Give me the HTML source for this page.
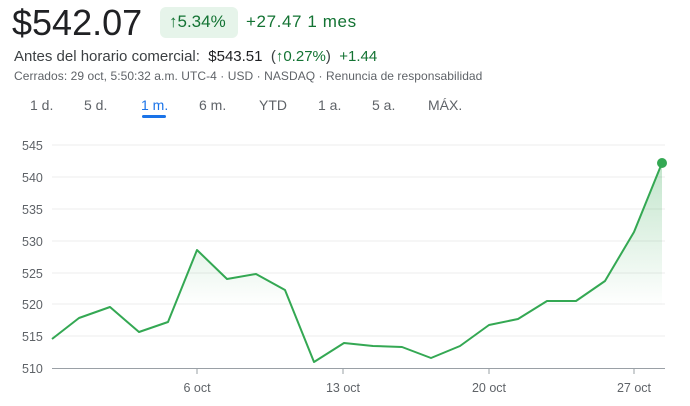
<!DOCTYPE html><html><head><meta charset="utf-8"><style>
body{margin:0;width:690px;height:406px;background:#fff;font-family:"Liberation Sans",Arial,sans-serif;overflow:hidden;position:relative}
.a{position:absolute;white-space:nowrap}
</style></head><body>
<div class="a" style="left:12px;top:2px;font-size:36px;color:#202124">$542.07</div>
<div class="a" style="left:160px;top:7px;width:78px;height:31px;background:#e6f4ea;border-radius:6px"></div>
<div class="a" style="left:169px;top:12px;font-size:17px;color:#137333">↑5.34%</div>
<div class="a" style="left:246px;top:12px;font-size:17px;letter-spacing:0.6px;color:#137333">+27.47 1 mes</div>
<div class="a" style="left:14px;top:48px;font-size:15px;color:#3c4043">Antes del horario comercial:&nbsp; <span style="color:#202124">$543.51</span>&nbsp; <span style="color:#137333"><span style="color:#3c4043">(</span>↑0.27%<span style="color:#3c4043">)</span>&nbsp; +1.44</span></div>
<div class="a" style="left:14px;top:69px;font-size:12px;letter-spacing:0.06px;color:#5f6368">Cerrados: 29 oct, 5:50:32 a.m. UTC-4 · USD · NASDAQ · Renuncia de responsabilidad</div>
<div class="a" style="top:97px;font-size:14px;color:#5f6368;left:30px">1 d.</div>
<div class="a" style="top:97px;font-size:14px;color:#5f6368;left:84px">5 d.</div>
<div class="a" style="top:97px;font-size:14px;color:#1a73e8;left:141px">1 m.</div>
<div class="a" style="left:142px;top:115px;width:24px;height:3px;background:#1a73e8;border-radius:2px"></div>
<div class="a" style="top:97px;font-size:14px;color:#5f6368;left:199px">6 m.</div>
<div class="a" style="top:97px;font-size:14px;color:#5f6368;left:259px">YTD</div>
<div class="a" style="top:97px;font-size:14px;color:#5f6368;left:318px">1 a.</div>
<div class="a" style="top:97px;font-size:14px;color:#5f6368;left:372px">5 a.</div>
<div class="a" style="top:97px;font-size:14px;color:#5f6368;left:428px">MÁX.</div>
<svg class="a" style="left:0;top:0" width="690" height="406">
<defs><linearGradient id="g" x1="0" y1="0" x2="0" y2="1"><stop offset="0" stop-color="#34a853" stop-opacity=".3"/><stop offset=".7" stop-color="#34a853" stop-opacity="0"/></linearGradient></defs>
<g stroke="#ececec" stroke-width="1">
<line x1="52" x2="665" y1="145" y2="145"/><line x1="52" x2="665" y1="177" y2="177"/><line x1="52" x2="665" y1="209" y2="209"/><line x1="52" x2="665" y1="241" y2="241"/><line x1="52" x2="665" y1="273" y2="273"/><line x1="52" x2="665" y1="304" y2="304"/><line x1="52" x2="665" y1="336" y2="336"/>
</g>
<line x1="52" x2="665" y1="368.5" y2="368.5" stroke="#9aa0a6"/>
<g stroke="#9aa0a6"><line x1="197" x2="197" y1="368" y2="374"/><line x1="343" x2="343" y1="368" y2="374"/><line x1="489" x2="489" y1="368" y2="374"/><line x1="634" x2="634" y1="368" y2="374"/></g>
<g font-size="12.5" fill="#5f6368" font-family="Liberation Sans,sans-serif">
<text x="22" y="150">545</text><text x="22" y="182">540</text><text x="22" y="214">535</text><text x="22" y="246">530</text><text x="22" y="278">525</text><text x="22" y="309">520</text><text x="22" y="341">515</text><text x="22" y="373">510</text>
<text x="197" y="392" text-anchor="middle">6 oct</text><text x="343" y="392" text-anchor="middle">13 oct</text><text x="489" y="392" text-anchor="middle">20 oct</text><text x="634" y="392" text-anchor="middle">27 oct</text>
</g>
<path d="M52,339 L79,318 110,307 139,332 168,322 197,250 227,279 256,274 285,290 314,362 344,343 373,346 402,347 431,358 460,346 489,325 518,319 547,301 576,301 605,281 634,232 662,163 L662,368 L52,368Z" fill="url(#g)"/>
<polyline points="52,339 79,318 110,307 139,332 168,322 197,250 227,279 256,274 285,290 314,362 344,343 373,346 402,347 431,358 460,346 489,325 518,319 547,301 576,301 605,281 634,232 662,163" fill="none" stroke="#34a853" stroke-width="2" stroke-linejoin="round"/>
<circle cx="662" cy="163" r="5" fill="#34a853"/>
</svg>
</body></html>
